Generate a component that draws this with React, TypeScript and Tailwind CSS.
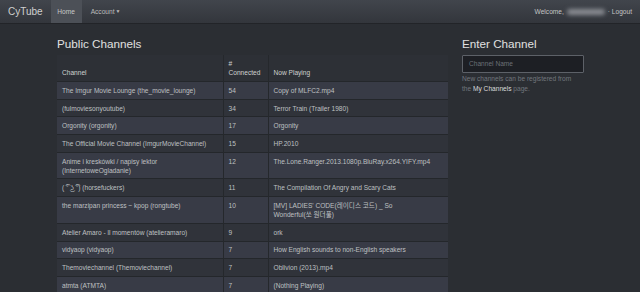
import React from "react";

const rows: [string, string, React.ReactNode][] = [
  ["The Imgur Movie Lounge (the_movie_lounge)", "54", "Copy of MLFC2.mp4"],
  ["(fulmoviesonyoutube)", "34", "Terror Train (Trailer 1980)"],
  ["Orgonity (orgonity)", "17", "Orgonity"],
  ["The Official Movie Channel (ImgurMovieChannel)", "15", "HP.2010"],
  ["Anime i kreskówki / napisy lektor (InternetoweOgladanie)", "12", "The.Lone.Ranger.2013.1080p.BluRay.x264.YIFY.mp4"],
  ["( ͡° ͜ʖ ͡°) (horsefuckers)", "11", "The Compilation Of Angry and Scary Cats"],
  [
    "the marzipan princess ~ kpop (rongtube)",
    "10",
    <>
      [MV] LADIES' CODE(레이디스 코드) _ So
      <br />
      Wonderful(쏘 원더풀)
    </>,
  ],
  ["Atelier Amaro - ll momentów (atelieramaro)", "9", "ork"],
  ["vidyaop (vidyaop)", "7", "How English sounds to non-English speakers"],
  ["Themoviechannel (Themoviechannel)", "7", "Oblivion (2013).mp4"],
  ["atmta (ATMTA)", "7", "(Nothing Playing)"],
];

export default function App() {
  return (
    <div
      className="w-[640px] h-[292px] overflow-hidden bg-[#2b2e33] text-[#bfc0c2]"
      style={{ fontFamily: '"Liberation Sans", Arial, "Noto Sans CJK KR", sans-serif' }}
    >
      <div className="h-[24px] flex items-stretch bg-gradient-to-b from-[#41454c] to-[#33363c] border-b border-[#222428]">
        <div className="pl-[8px] pr-[8px] flex items-center text-[10px] text-[#d0d0d0]">CyTube</div>
        <div className="w-[31px] flex items-center justify-center bg-[#4c5057] text-[6.6px] text-[#c8c8c8]">Home</div>
        <div className="pl-[9px] flex items-center text-[6.6px] text-[#bcbcbc]">
          Account<span className="ml-[1px] text-[5px]">▼</span>
        </div>
        <div className="ml-auto pr-[8px] flex items-center text-[6.6px] text-[#c4c4c4]">
          <span>Welcome,</span>
          <span className="mx-[3px] w-[38px] h-[6px] rounded-full bg-[#8a8d93] blur-[2px]" />
          <span>· Logout</span>
        </div>
      </div>

      <div className="flex pl-[57px] pt-[12px]">
        <div className="w-[391px]">
          <div className="text-[11.7px] leading-[16px] text-[#e0e0e0] h-[19px]">Public Channels</div>
          <table className="w-[391px] border-collapse text-[6.6px] leading-[9px] table-fixed">
            <colgroup>
              <col className="w-[166px]" />
              <col className="w-[45px]" />
              <col className="w-[180px]" />
            </colgroup>
            <thead>
              <tr className="bg-[#2d3036] text-[#d0d0d0]">
                <th className="text-left font-medium align-bottom px-[5px] py-[4px] border-r border-[#25282c]">Channel</th>
                <th className="text-left font-medium align-bottom px-[5px] py-[4px] border-r border-[#25282c]">
                  #<br />Connected
                </th>
                <th className="text-left font-medium align-bottom px-[5px] py-[4px]">Now Playing</th>
              </tr>
            </thead>
            <tbody>
              {rows.map((r, i) => (
                <tr
                  key={i}
                  className={`${i % 2 === 0 ? "bg-[#383b46]" : "bg-[#30333a]"} border-t border-[#24272b]`}
                >
                  <td className="align-top px-[5px] py-[3.85px] border-r border-[#25282c]">{r[0]}</td>
                  <td className="align-top px-[5px] py-[3.85px] border-r border-[#25282c]">{r[1]}</td>
                  <td className="align-top px-[5px] py-[3.85px]">{r[2]}</td>
                </tr>
              ))}
            </tbody>
          </table>
        </div>

        <div className="ml-[14px] w-[122px]">
          <div className="text-[11.7px] leading-[16px] text-[#e0e0e0] h-[19px]">Enter Channel</div>
          <div className="h-[18px] border border-[#5d6168] bg-[#1d1f24] rounded-[1px] flex items-center px-[6px] text-[6.6px] text-[#6c7077]">
            Channel Name
          </div>
          <div className="mt-[1px] text-[6.6px] leading-[10px] text-[#72767d]">
            New channels can be registered from
            <br />
            the <span className="text-[#dcdcdc]">My Channels</span> page.
          </div>
        </div>
      </div>
    </div>
  );
}
